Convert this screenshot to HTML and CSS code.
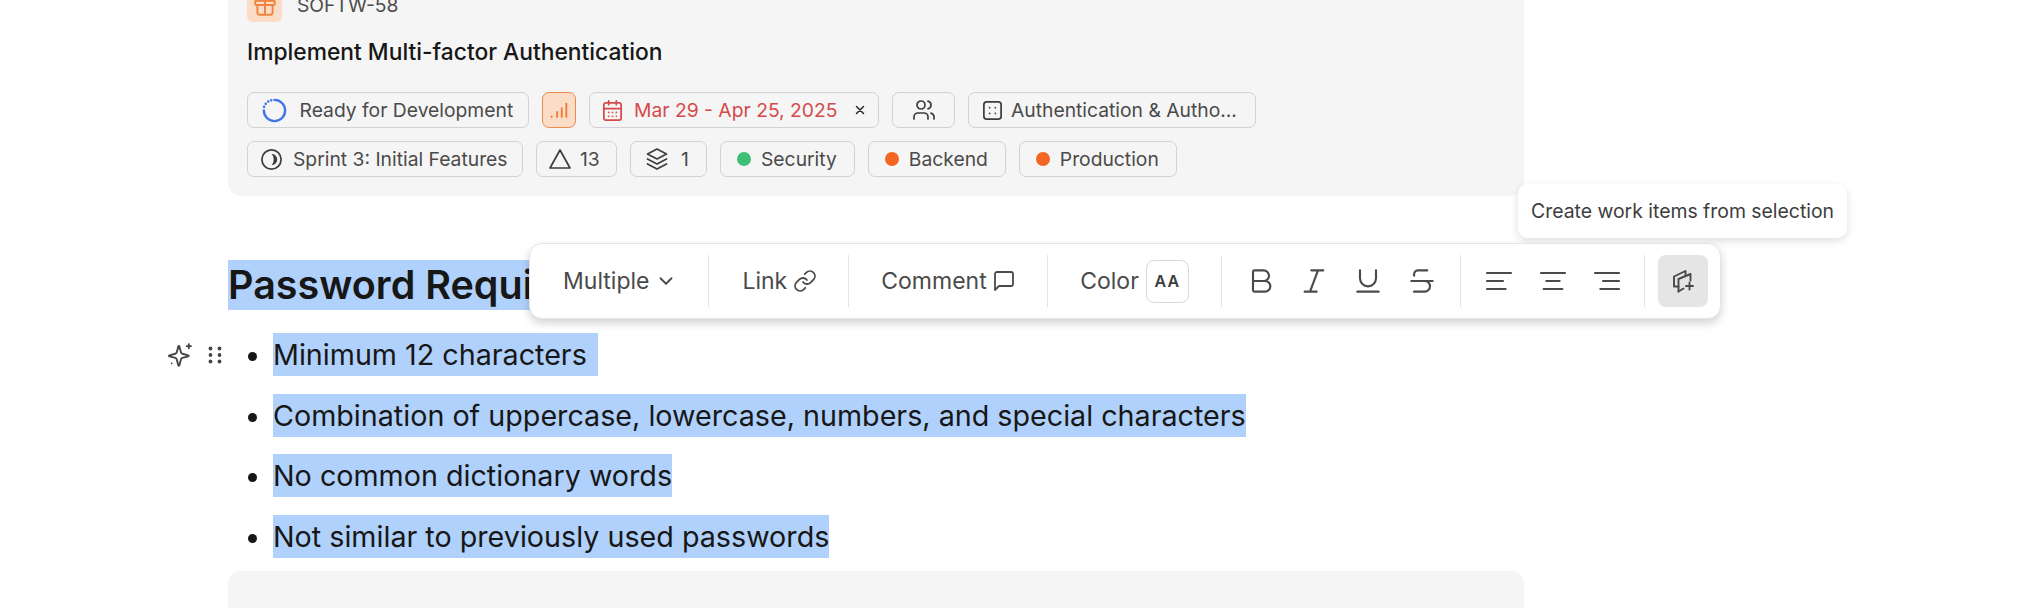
FILE: index.html
```html
<!DOCTYPE html>
<html lang="en">
<head>
<meta charset="utf-8">
<title>Password Requirements</title>
<link rel="stylesheet" href="styles.css">
</head>
<body>
<main class="doc">
  <section class="card">
    <div class="card-head">
      <span class="type-icon">
        <svg class="ic" viewBox="0 0 24 24"><rect x="3" y="8" width="18" height="4" rx="1"/><path d="M12 8v13M19 12v7a2 2 0 0 1-2 2H7a2 2 0 0 1-2-2v-7M7.5 8a2.5 2.5 0 0 1 0-5C11 3 12 8 12 8s1-5 4.500-5a2.500 2.500 0 0 1 0 5"/></svg>
      </span>
      <span class="card-id">SOFTW-58</span>
    </div>
    <h3 class="card-title">Implement Multi-factor Authentication</h3>
    <div class="chips">
      <span class="chip chip-state">
        <svg class="ic-state" viewBox="0 0 24 24"><path d="M12 1.800a10.200 10.200 0 1 1-10.200 10.200" /><path class="dots" d="M2 8.500v.01M3.600 5.600v.01M6 3.400v.01M8.900 2.200v.01"/></svg>
        Ready for Development
      </span>
      <span class="chip chip-priority">
        <svg class="ic-pri" viewBox="0 0 24 24"><path d="M4 19v.5M10 14v5.500M15 10v9.500M20 5v14.500"/></svg>
      </span>
      <span class="chip chip-date">
        <svg class="ic" viewBox="0 0 24 24"><path d="M8 2v4M16 2v4"/><rect x="3" y="4" width="18" height="18" rx="2"/><path d="M3 10h18M8 14h.01M12 14h.01M16 14h.01M8 18h.01M12 18h.01M16 18h.01"/></svg>
        Mar 29 - Apr 25, 2025
        <svg class="ic-x" viewBox="0 0 24 24"><path d="M18 6 6 18M6 6l12 12"/></svg>
      </span>
      <span class="chip chip-user">
        <svg class="ic" viewBox="0 0 24 24"><path d="M16 21v-2a4 4 0 0 0-4-4H6a4 4 0 0 0-4 4v2"/><circle cx="9" cy="7" r="4"/><path d="M22 21v-2a4 4 0 0 0-3-3.870M16 3.130a4 4 0 0 1 0 7.750"/></svg>
      </span>
      <span class="chip chip-module">
        <svg class="ic" viewBox="0 0 24 24"><rect x="3" y="3" width="18" height="18" rx="3"/><path d="M9 9h.01M15 9h.01M9 15h.01M15 15h.01"/></svg>
        Authentication &amp; Autho...
      </span>
    </div>
    <div class="chips">
      <span class="chip chip-sprint">
        <svg class="ic" viewBox="0 0 24 24"><circle cx="12" cy="12" r="10"/><path class="solid" d="M12 6a6 6 0 0 1 0 12c1.500-1.500 2.200-3.500 2.200-6S13.500 7.500 12 6z"/></svg>
        Sprint 3: Initial Features
      </span>
      <span class="chip chip-est">
        <svg class="ic" viewBox="0 0 24 24"><path d="M12 3 22 21H2z"/></svg>
        13
      </span>
      <span class="chip chip-sub">
        <svg class="ic" viewBox="0 0 24 24"><path d="m12 2 9.500 5-9.500 5-9.500-5zM2.500 12l9.500 5 9.500-5M2.500 17l9.500 5 9.500-5"/></svg>
        1
      </span>
      <span class="chip chip-label"><i class="dot dot-green"></i>Security</span>
      <span class="chip chip-label"><i class="dot dot-orange"></i>Backend</span>
      <span class="chip chip-label"><i class="dot dot-orange"></i>Production</span>
    </div>
  </section>

  <h2 class="heading"><span class="sel">Password Requirements</span></h2>

  <ul class="list">
    <li class="item">
      <span class="gutter">
        <svg class="ic-gut" viewBox="0 0 24 24"><path d="M9.900 15.500A2 2 0 0 0 8.500 14.100l-5.600-1.500a.5.5 0 0 1 0-1l5.600-1.500A2 2 0 0 0 9.900 8.700l1.500-5.600a.5.5 0 0 1 1 0l1.500 5.600a2 2 0 0 0 1.400 1.400l5.600 1.500a.5.5 0 0 1 0 1l-5.600 1.500a2 2 0 0 0-1.400 1.400l-1.500 5.600a.5.5 0 0 1-1 0z" transform="translate(-1.500 1.200)"/><path d="M20 2v4M22 4h-4M3.500 20.500v.01"/></svg>
        <svg class="ic-grip" viewBox="0 0 14 18"><circle cx="2.500" cy="2.500" r="1.900"/><circle cx="11.500" cy="2.500" r="1.900"/><circle cx="2.500" cy="9" r="1.900"/><circle cx="11.500" cy="9" r="1.900"/><circle cx="2.500" cy="15.500" r="1.900"/><circle cx="11.500" cy="15.500" r="1.900"/></svg>
      </span>
      <span class="sel sel-trail">Minimum 12 characters&nbsp;</span>
    </li>
    <li class="item"><span class="sel">Combination of uppercase, lowercase, numbers, and special characters</span></li>
    <li class="item"><span class="sel">No common dictionary words</span></li>
    <li class="item"><span class="sel">Not similar to previously used passwords</span></li>
  </ul>

  <section class="card card-next"></section>
</main>

<div class="tooltip">Create work items from selection</div>

<div class="toolbar">
  <div class="group group-multiple">Multiple
    <svg class="ic-chev" viewBox="0 0 24 24"><path d="m6 9 6 6 6-6"/></svg>
  </div>
  <div class="group group-link">Link
    <svg class="ic-tb" viewBox="0 0 24 24"><path d="M10 13a5 5 0 0 0 7.540.540l3-3a5 5 0 0 0-7.070-7.070l-1.720 1.710"/><path d="M14 11a5 5 0 0 0-7.540-.540l-3 3a5 5 0 0 0 7.070 7.070l1.710-1.710"/></svg>
  </div>
  <div class="group group-comment">Comment
    <svg class="ic-tb" viewBox="0 0 24 24"><path d="M21 15a2 2 0 0 1-2 2H7l-4 4V5a2 2 0 0 1 2-2h14a2 2 0 0 1 2 2z"/></svg>
  </div>
  <div class="group group-color">Color
    <span class="color-btn">AA</span>
  </div>
  <div class="group group-icons">
    <span class="tool"><svg class="ic-fmt" viewBox="0 0 24 24"><path d="M6 12h9a4 4 0 0 1 0 8H7a1 1 0 0 1-1-1V5a1 1 0 0 1 1-1h7a4 4 0 0 1 0 8"/></svg></span>
    <span class="tool"><svg class="ic-fmt" viewBox="0 0 24 24"><path d="M19 4h-9M14 20H5M15 4 9 20"/></svg></span>
    <span class="tool"><svg class="ic-fmt" viewBox="0 0 24 24"><path d="M6 4v6a6 6 0 0 0 12 0V4M4 20h16"/></svg></span>
    <span class="tool"><svg class="ic-fmt" viewBox="0 0 24 24"><path d="M16 4H9a3 3 0 0 0-2.830 4M14 12a4 4 0 0 1 0 8H6M4 12h16"/></svg></span>
  </div>
  <div class="group group-icons group-align">
    <span class="tool"><svg class="ic-fmt" viewBox="0 0 24 24"><path d="M21 6H3M15 12H3M17 18H3"/></svg></span>
    <span class="tool"><svg class="ic-fmt" viewBox="0 0 24 24"><path d="M21 6H3M17 12H7M19 18H5"/></svg></span>
    <span class="tool"><svg class="ic-fmt" viewBox="0 0 24 24"><path d="M21 6H3M21 12H9M21 18H7"/></svg></span>
  </div>
  <div class="group group-last">
    <span class="tool tool-active"><svg class="ic-create" viewBox="0 0 24 24"><path d="M7.500 17.500H3V7.500L14.500 2v4"/><path d="M7.500 22.500V10L19.500 5v6.500"/><path d="M7.500 22.500l5-3M18.500 13.500v7M15 17h7"/></svg></span>
  </div>
</div>
</body>
</html>
```

FILE: styles.css
```css
* { box-sizing: border-box; }
html, body { margin: 0; height: 608px; overflow: hidden; background: #fff; }
body { font-family: Inter, "Noto Sans", sans-serif; color: #171717; position: relative; }

svg { fill: none; stroke: currentColor; stroke-linecap: round; stroke-linejoin: round; flex: none; }

.doc { width: 1296px; margin-left: 228px; }

.card { background: #f5f5f5; border-radius: 13px; padding: 17px 19px 19px; margin-top: -30px; }
.card-head { display: flex; align-items: center; gap: 15px; height: 35px; }
.type-icon { width: 35px; height: 35px; border-radius: 6px; background: #fbdcc6; color: #f0843f; display: flex; align-items: center; justify-content: center; }
.type-icon .ic { width: 26px; height: 26px; stroke-width: 1.800; color: #f0843f; }
.card-id { font-size: 19.300px; color: #4d4d4d; }
.card-title { margin: 16px 0 0; font-size: 22.800px; line-height: 28px; font-weight: 500; color: #171717; }

.chips { display: flex; gap: 13px; margin-top: 13px; }
.card-title + .chips { margin-top: 26px; }
.chip { height: 36px; border: 1px solid #d2d2d2; border-radius: 7px; display: flex; align-items: center; font-size: 19.300px; color: #4a4a4a; white-space: nowrap; gap: 8px; }
.ic { width: 23px; height: 23px; stroke-width: 1.800; color: #3d3d3d; }
.chip-state { padding: 0 14px; gap: 12.5px; width: 282px; }
.ic-state { width: 25px; height: 25px; color: #3f76e8; stroke-width: 2.300; }
.ic-state .dots { stroke-width: 2.500; }
.chip-priority { width: 34px; justify-content: center; background: #fbdcc6; border-color: #ef8a4c; color: #ef7a30; }
.ic-pri { width: 22px; height: 22px; stroke-width: 2; }
.chip-date { padding: 0 11px; color: #d64a4a; width: 290px; gap: 10px; }
.chip-date .ic { color: #d64a4a; }
.ic-x { width: 14px; height: 14px; stroke-width: 2.600; color: #2e2e2e; margin-left: 5px; }
.chip-user { width: 63px; justify-content: center; }
.chip-user .ic { width: 24px; height: 24px; stroke-width: 1.700; }
.chip-module { width: 288px; padding: 0 12px; gap: 7px; }
.chip-sprint { width: 276px; padding: 0 12px; gap: 10px; }
.solid { fill: currentColor; stroke: none; }
.chip-est { width: 81px; padding: 0 11px; gap: 8px; }
.chip-est .ic { width: 24px; height: 24px; stroke-width: 1.700; }
.chip-sub { width: 77px; padding: 0 14px; gap: 12px; }
.chip-sub .ic { width: 24px; height: 24px; stroke-width: 1.700; }
.chip-label { padding: 0 17px 0 16px; gap: 10px; }
.dot { width: 14px; height: 14px; border-radius: 50%; flex: none; }
.dot-green { background: #3dbf75; }
.dot-orange { background: #f26522; }

.sel { display: inline-block; vertical-align: top; background: #b0d1fb; white-space: nowrap; }
.sel-trail { padding-right: 3px; }

.heading { margin: 64px 0 0; font-size: 39.500px; line-height: 50px; font-weight: 600; color: #171717; }

.list { margin: 23px 0 0; padding: 0 0 0 45px; font-size: 28.700px; line-height: 43px; color: #171717; }
.item { position: relative; margin-bottom: 17.670px; }
.gutter { position: absolute; left: -105px; top: 9px; display: flex; align-items: center; gap: 15px; color: #454545; }
.ic-gut { width: 25px; height: 25px; stroke-width: 1.800; }
.ic-grip { width: 14px; height: 18px; fill: #454545; stroke: none; }

.card-next { height: 80px; margin-top: -5px; }

.toolbar { position: absolute; left: 529px; top: 243px; width: 1192px; height: 76px; background: #fff; border: 1px solid #e5e5e5; border-radius: 13px; box-shadow: 0 4px 10px rgba(0,0,0,.18); display: flex; align-items: center; }
.group { height: 52px; display: flex; align-items: center; border-right: 1px solid #e5e5e5; font-size: 23px; color: #4a4a4a; }
.group-multiple { padding: 0 31px 0 33px; gap: 6px; }
.group-link { padding: 0 31px 0 33px; gap: 6px; }
.group-comment { padding: 0 31px 0 32px; gap: 5px; }
.group-color { padding: 0 32px 0 32.500px; gap: 7px; }
.group-icons { padding: 0 11px 0 12px; }
.group-align { padding-right: 10px; }
.group-last { border-right: 0; padding-left: 13px; }
.ic-chev { width: 22px; height: 22px; stroke-width: 2; }
.ic-tb { width: 24px; height: 24px; stroke-width: 1.800; }
.color-btn { width: 43px; height: 43px; border: 1px solid #d9d9d9; border-radius: 8px; display: flex; align-items: center; justify-content: center; font-size: 16px; font-weight: 600; letter-spacing: 1px; color: #3d3d3d; }
.tool { width: 53.700px; height: 52px; display: flex; align-items: center; justify-content: center; }
.ic-fmt { width: 32px; height: 32px; stroke-width: 1.600; }
.tool-active { width: 50px; background: #e5e5e5; border-radius: 8px; }
.ic-create { width: 24px; height: 24px; stroke-width: 1.900; }

.tooltip { position: absolute; left: 1518px; top: 184px; width: 329px; height: 54px; background: #fff; border-radius: 10px; box-shadow: 0 3px 8px rgba(0,0,0,.13); font-size: 19.400px; color: #3d3d3d; display: flex; align-items: center; padding-left: 13px; white-space: nowrap; }
```
